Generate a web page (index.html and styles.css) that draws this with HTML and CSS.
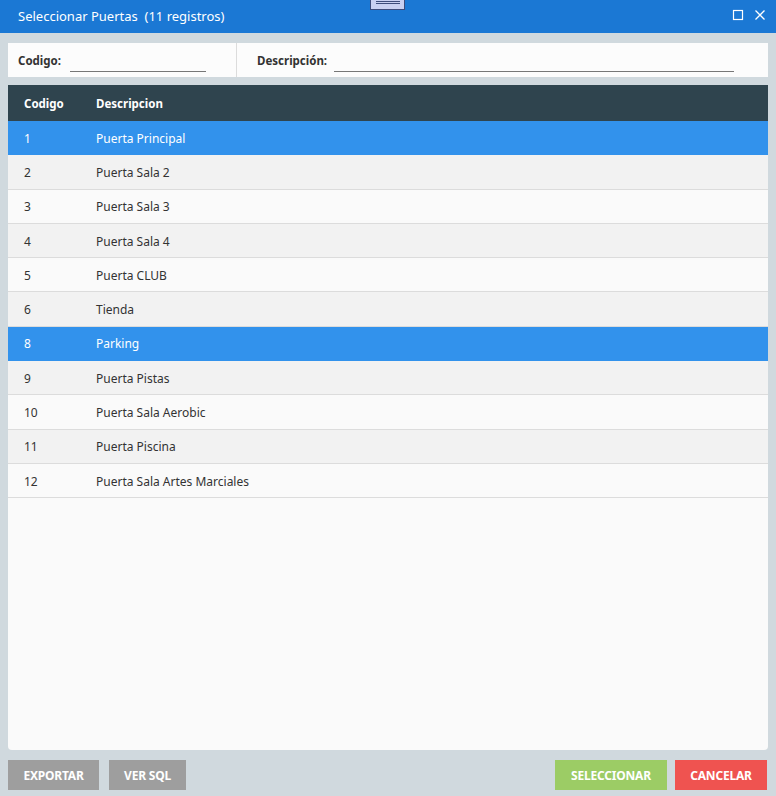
FILE: index.html
```html
<!DOCTYPE html>
<html lang="es">
<head>
  <meta charset="UTF-8">
  <title>Seleccionar Puertas</title>
  <link rel="stylesheet" href="styles.css">
</head>
<body>
  <div class="window">
    <!-- Title bar -->
    <div class="titlebar">
      <span class="title">Seleccionar Puertas&nbsp; (11 registros)</span>
      <div class="grip"><span></span><span></span></div>
      <div class="win-btns">
        <svg width="12" height="12" viewBox="0 0 12 12"><rect x="1.5" y="1.5" width="9" height="9" fill="none" stroke="#fff" stroke-width="1.2"/></svg>
        <svg width="12" height="12" viewBox="0 0 12 12"><path d="M1.5 1.5 L10.5 10.5 M10.5 1.5 L1.5 10.5" stroke="#fff" stroke-width="1.3"/></svg>
      </div>
    </div>

    <div class="content">
      <!-- Filters -->
      <div class="filters">
        <div class="filter filter-code">
          <label>Codigo:</label>
          <input type="text" class="field field-code">
        </div>
        <div class="filter filter-desc">
          <label>Descripción:</label>
          <input type="text" class="field field-desc">
        </div>
      </div>

      <!-- Grid -->
      <div class="grid">
        <table>
          <colgroup><col class="col-code"><col></colgroup>
          <thead>
            <tr><th>Codigo</th><th>Descripcion</th></tr>
          </thead>
          <tbody>
            <tr class="selected"><td>1</td><td>Puerta Principal</td></tr>
            <tr><td>2</td><td>Puerta Sala 2</td></tr>
            <tr><td>3</td><td>Puerta Sala 3</td></tr>
            <tr><td>4</td><td>Puerta Sala 4</td></tr>
            <tr><td>5</td><td>Puerta CLUB</td></tr>
            <tr><td>6</td><td>Tienda</td></tr>
            <tr class="selected"><td>8</td><td>Parking</td></tr>
            <tr><td>9</td><td>Puerta Pistas</td></tr>
            <tr><td>10</td><td>Puerta Sala Aerobic</td></tr>
            <tr><td>11</td><td>Puerta Piscina</td></tr>
            <tr><td>12</td><td>Puerta Sala Artes Marciales</td></tr>
          </tbody>
        </table>
      </div>

      <!-- Buttons -->
      <div class="actions">
        <button class="btn btn-gray btn-export">EXPORTAR</button>
        <button class="btn btn-gray btn-sql">VER SQL</button>
        <span class="spacer"></span>
        <button class="btn btn-green btn-select">SELECCIONAR</button>
        <button class="btn btn-red btn-cancel">CANCELAR</button>
      </div>
    </div>
  </div>
</body>
</html>
```

FILE: styles.css
```css
/* Dialog styling */
html, body {
  margin: 0;
  height: 100%;
}
body {
  font-family: 'Noto Sans', 'Open Sans', sans-serif;
  background: #d0d9de;
  color: #333;
}
.window {
  display: flex;
  flex-direction: column;
  height: 100%;
}
.titlebar {
  position: relative;
  height: 33px;
  background: #1b78d4;
  display: flex;
  align-items: center;
  padding: 0 10px 0 18px;
  color: #fff;
  flex-shrink: 0;
}
.title {
  font-size: 13px;
  flex: 1;
  margin-top: -2px;
}
.grip {
  position: absolute;
  left: 370px;
  top: 0;
  width: 33px;
  height: 8px;
  background: #c9d0f2;
  border: 1px solid #3d4c7c;
  border-top: none;
  display: flex;
  flex-direction: column;
  align-items: center;
  gap: 1px;
  padding-top: 1px;
  box-sizing: content-box;
}
.grip span {
  display: block;
  width: 24px;
  height: 1px;
  background: #3d4c7c;
}
.win-btns {
  display: flex;
  gap: 10px;
  margin-top: -4px;
}
.content {
  flex: 1;
  display: flex;
  flex-direction: column;
  padding: 10px 8px 6px 8px;
  min-height: 0;
}
.filters {
  height: 34px;
  background: #fcfcfc;
  display: flex;
  font-size: 11.5px;
  font-weight: bold;
  color: #333;
}
.filter {
  display: flex;
  align-items: center;
}
.filter-code {
  box-sizing: border-box;
  width: 229px;
  padding-left: 10px;
  border-right: 1px solid #dcdcdc;
}
.filter-code label {
  margin-right: 9px;
}
.filter-desc {
  padding-left: 20px;
}
.filter-desc label {
  margin-right: 7px;
}
.field {
  border: none;
  border-bottom: 1px solid #777;
  background: transparent;
  height: 18px;
  padding: 0;
  margin-top: 4px;
  outline: none;
}
.field-code {
  width: 136px;
}
.field-desc {
  width: 400px;
}
.grid {
  flex: 1;
  margin-top: 8px;
  background: #fafafa;
  border-radius: 0 0 4px 4px;
  overflow: hidden;
}
table {
  width: 100%;
  border-collapse: collapse;
  table-layout: fixed;
  font-size: 12px;
}
col.col-code {
  width: 72px;
}
th {
  background: #2f444e;
  color: #fff;
  font-weight: bold;
  font-size: 11.5px;
  text-align: left;
  height: 36px;
  padding: 0 0 0 16px;
}
td {
  height: 32.3px;
  padding: 1px 0 0 16px;
  border-bottom: 1px solid #dcdcdc;
  color: #333;
}
tbody tr:nth-child(even) {
  background: #f2f2f2;
}
tbody tr.selected {
  background: #3292ec;
}
tbody tr.selected td {
  color: #fff;
  border-bottom-color: #3292ec;
}
.actions {
  display: flex;
  gap: 10px;
  margin-top: 10px;
}
.spacer {
  flex: 1;
}
.btn {
  height: 30px;
  border: none;
  color: #fff;
  font-family: 'Noto Sans', sans-serif;
  font-weight: bold;
  font-size: 12px;
  letter-spacing: -0.2px;
  padding: 0;
  cursor: pointer;
}
.btn-gray { background: #9e9e9e; }
.btn-green { background: #9ccc65; }
.btn-red { background: #ef5350; }
.btn-export { width: 91px; }
.btn-sql { width: 77px; }
.btn-select { width: 112px; }
.btn-cancel { width: 92px; margin-left: -2px; margin-right: 1px; }
```
